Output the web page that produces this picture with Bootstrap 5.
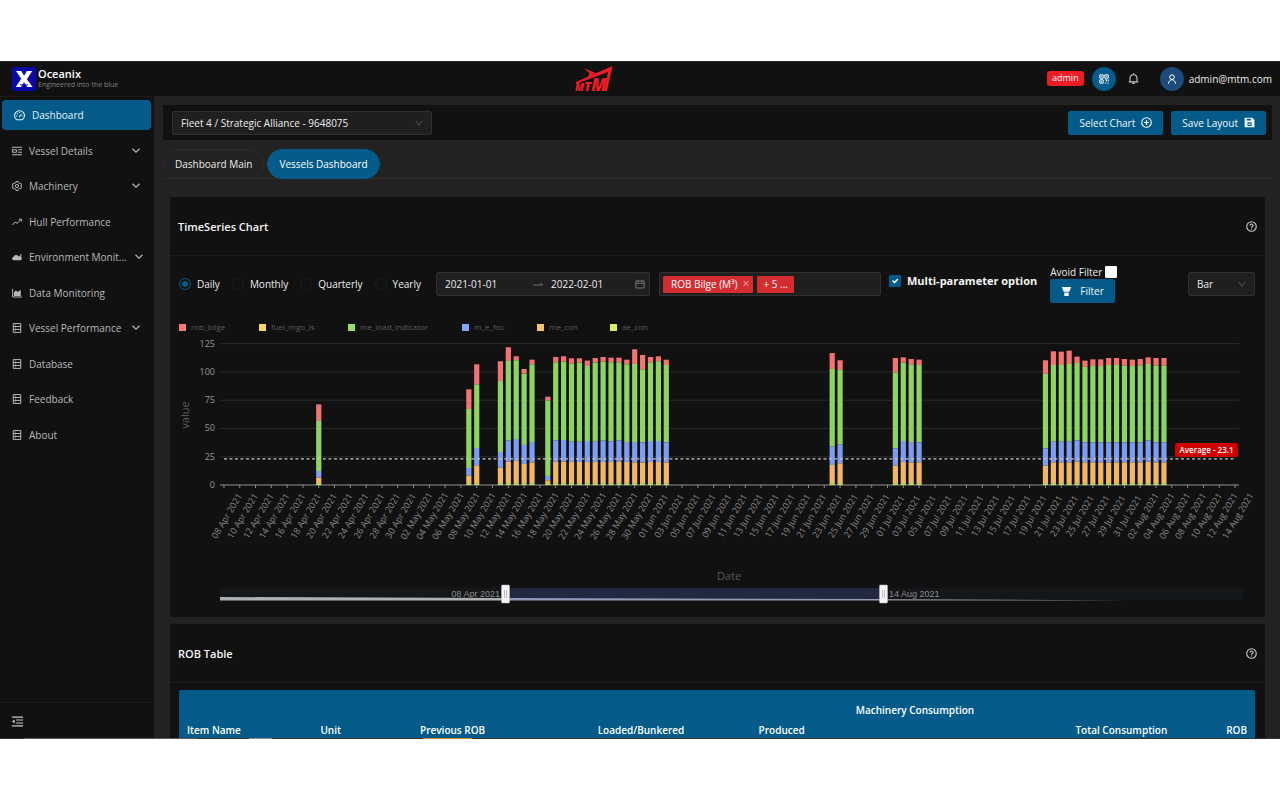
<!DOCTYPE html>
<html lang="en" data-bs-theme="dark">
<head>
<meta charset="utf-8">
<meta name="viewport" content="width=device-width, initial-scale=1">
<title>Oceanix - Vessels Dashboard</title>
<link href="https://cdn.jsdelivr.net/npm/bootstrap@5.3.0/dist/css/bootstrap.min.css" rel="stylesheet">
<style>
  :root { --ink:#111; --panel:#222; --line:#1d1d1d; --edge:#303030; --brand:#045b89; --danger:#d32d31; }
  body { font-family:"Open Sans","Noto Sans",sans-serif; font-size:10px; line-height:16px; background:#fff; color:#ececec; padding:61px 0; }
  .shell { height:calc(100vh - 122px); background:var(--panel); overflow:hidden; position:relative; }
  .topbar { height:35px; background:var(--ink); box-shadow:inset 0 1px #2c2c2c; }
  .brand-area { width:154px; padding-left:12px; gap:2px; }
  .brand-mark { width:24px; height:24px; }
  .brand-name { font-size:11px; line-height:13px; font-weight:600; color:#fff; }
  .brand-tag { font-size:7px; line-height:10px; color:#808080; }
  .side { width:154px; background:var(--ink); border-top:1px solid var(--line); }
  .side nav { height:350px; padding:0 3px 0 2px; margin-top:3px; }
  .side a { height:30px; padding:0 10px; color:#b8b8b8; gap:7px; border-radius:4px; text-decoration:none; white-space:nowrap; }
  .side a.active { background:var(--brand); color:#e8f1f6; padding-left:12px; }
  .side a.active svg { width:11px; height:11px; }
  .side .collapser { height:37px; padding-left:12px; border-top:1px solid var(--line); }
  .bare { background:none; border:0; padding:0; display:flex; color:#c8c8c8; }
  .ic { width:10px; height:10px; flex:none; fill:none; stroke:currentColor; stroke-width:1.2; }
  .ic-md { width:11px; height:11px; flex:none; }
  .main-area { padding:9px 8px 0 9px; min-width:0; }
  .toolbox { background:var(--ink); height:35px; padding:0 6px 0 9px; }
  .ctl { height:24px; background-color:#1f1f1f; border:1px solid var(--edge); border-radius:2px; color:#ececec; font-size:10px; line-height:16px; padding:3px 8px; }
  select.ctl { background-position:right 8px center; background-size:8px 8px;
    background-image:url("data:image/svg+xml,%3Csvg xmlns='http://www.w3.org/2000/svg' viewBox='0 0 10 10'%3E%3Cpath d='M1 2l4 6 4-6' fill='none' stroke='%23555' stroke-width='1.2'/%3E%3C/svg%3E"); }
  .fleet { width:260px; }
  .kind { width:67px; }
  .act { height:24px; background:var(--brand); color:#f2f7fa; border:0; border-radius:2px; line-height:16px; padding:0 11px; gap:6px; }
  .act .ic { width:11px; height:11px; }
  .tabs { margin-top:9px; border-bottom:1px solid #2c2c2c; gap:3px; }
  .tabs button { height:30px; border:1px solid #2c2c2c; border-radius:15px; background:none; color:#ececec; padding:0 11px; margin-bottom:-1px; white-space:nowrap; }
  .tabs button.active { background:var(--brand); border-color:var(--brand); color:#fff; }
  .box { background:var(--ink); margin:0 7px; }
  .box-head { height:59px; border-bottom:1px solid var(--line); padding:0 8px; }
  .box-head h2 { font-size:11px; line-height:16px; padding-top:2px; font-weight:600; color:#f5f5f5; }
  .chart-box { margin-top:18px; height:420px; }
  .filters { padding:2px 10px 0 9px; height:54px; }
  .form-check-input { margin:0; width:12px; height:12px; flex:none; }
  .form-check-input[type=radio] { background-color:transparent; border-color:#1f1f1f; }
  .form-check-input[type=radio]:checked { border-color:var(--brand);
    background-image:url("data:image/svg+xml,%3Csvg xmlns='http://www.w3.org/2000/svg' viewBox='0 0 12 12'%3E%3Ccircle cx='6' cy='6' r='3.6' fill='%23045b89'/%3E%3C/svg%3E"); }
  .form-check-input[type=checkbox] { border-radius:1px; background-color:#fff; border-color:#fff; }
  .form-check-input[type=checkbox]:checked { background-color:var(--brand); border-color:var(--brand); }
  .opts { gap:12px; width:257px; }
  .opts label, .multi { gap:6px; }
  .range { width:214px; }
  .range input { width:84px; background:none; border:0; color:#ececec; padding:0; line-height:16px; }
  .picks { width:222px; padding:2px 3px; gap:4px; margin-left:9px; }
  .pick { background:var(--danger); color:#fff; height:17px; padding:0 4px 0 8px; gap:5px; border-radius:1px; white-space:nowrap; }
  .pick button { background:none; border:0; padding:0; color:#f3a5a7; line-height:16px; font-size:12px; }
  .pick.more { padding:0 6px; }
  .multi { margin-left:8px; margin-bottom:6px; font-size:11px; font-weight:700; color:#f5f5f5; }
  .avoid { margin-left:13px; }
  .avoid label { gap:3px; line-height:14px; }
  .avoid .act { gap:8px; }
  .role { background:#ee1c25; color:#fff; border-radius:3px; height:15px; line-height:14px; font-size:9px; padding:0 5px; margin-right:8px; }
  .bell { margin:0 21px 0 12px; }
  .mail { margin-left:5px; }
  .round { width:24px; height:24px; border-radius:50%; border:0; padding:0; background:var(--brand); color:#fff; }
  .round.who { background:#1d4b7a; }
  .plot { display:block; width:100%; }
  .rob-box { margin-top:7px; }
  .rob { margin:7px 10px 0 9px; width:calc(100% - 19px); table-layout:fixed; background:var(--brand); color:#fff; line-height:16px; border-radius:2px; }
  .rob th { height:40px; padding:0 8px; font-weight:600; white-space:nowrap; }
  .foot { position:absolute; left:0; right:0; bottom:0; height:1px; background:linear-gradient(90deg,#333 24px,#625f60 24px,#5a595a 198px,#333 198px,#333 249px,#8a8f93 249px,#8a8f93 272px,#333 272px,#333 423px,#cf8630 423px,#cf8630 472px,#333 472px); }
</style>
</head>
<body>
<svg class="d-none" aria-hidden="true">
  <symbol id="i-down" viewBox="0 0 10 10"><path d="M1.500 2.800L5 6.200l3.500-3.400"/></symbol>
  <symbol id="i-dash" viewBox="0 0 12 12"><path d="M2.900 10.600a5.400 5.400 0 1 1 6.200 0zM5.500 7.500l2.700-2.700M2.300 6.500h1M6 2.300v1M3.300 3.700l.7.700M9 6.500h.8"/></symbol>
  <symbol id="i-detail" viewBox="0 0 12 12"><path d="M0 1.500h12M0 10.500h12M.6 4.500h5v3h-5zM7.500 4.500H12M7.500 7.500H12"/></symbol>
  <symbol id="i-gear" viewBox="0 0 12 12"><path d="M4.700.7h2.600l.4 1.500 1.200.7 1.500-.4 1.200 2.200L10.500 6l1.100 1.200-1.200 2.200-1.500-.4-1.200.8-.4 1.500H4.700l-.4-1.500-1.200-.8-1.500.4L.4 7.200 1.500 6 .4 4.700l1.200-2.200 1.500.4 1.200-.7z"/><circle cx="6" cy="6" r="1.900"/></symbol>
  <symbol id="i-trend" viewBox="0 0 12 12"><path d="M.5 9.500l3.200-3.500 2.500 1.500 4.800-4.500M8.500 2.700H11.300v2.500"/></symbol>
  <symbol id="i-cloud" viewBox="0 0 12 12"><path fill="currentColor" stroke="none" d="M1.800 10a2 2 0 0 1-.2-3.900A3.300 3.300 0 0 1 7.700 5.300 2.400 2.400 0 0 1 10.300 10zM9 3.500l2.500-1L11 5.500z"/></symbol>
  <symbol id="i-area" viewBox="0 0 12 12"><path d="M.8 1v9.800H12"/><path fill="currentColor" stroke="none" d="M2.300 9.500V5.500l2.400-2.700 2.300 2 3.500-2.800v7.500z"/></symbol>
  <symbol id="i-rows" viewBox="0 0 12 12"><path d="M1.500.7h9v10.600h-9zM1.500 4.200h9M1.500 7.700h9M3.500 2.500h1M3.500 6h1M3.500 9.500h1"/></symbol>
  <symbol id="i-fold" viewBox="0 0 12 12"><path d="M0 1.200h12M4.500 4.400H12M4.500 7.600H12M0 10.800h12"/><path fill="currentColor" stroke="none" d="M3 3.800v4.400L0 6z"/></symbol>
  <symbol id="i-plus" viewBox="0 0 12 12"><circle cx="6" cy="6" r="5.200"/><path d="M6 3.300v5.400M3.300 6h5.400"/></symbol>
  <symbol id="i-help" viewBox="0 0 12 12"><circle cx="6" cy="6" r="5.200"/><path d="M4.300 4.900c0-2.300 3.400-2.200 3.400-.1C7.700 6 6 6 6 7.400M6 8.300v1.100"/></symbol>
  <symbol id="i-save" viewBox="0 0 12 12"><path fill="currentColor" stroke="none" fill-rule="evenodd" d="M.7.700h8.300l2.400 2.400v8.200H.7zM3 2v1.800h4.500V2zM3.800 5.800v4h4.500v-4zM5 7h2v1.600H5z"/></symbol>
  <symbol id="i-funnel" viewBox="0 0 12 12"><path fill="currentColor" stroke="none" d="M.8 1h10.400L9 6.300H3zM3.600 7.200h4.800V11H3.600z"/></symbol>
  <symbol id="i-cal" viewBox="0 0 12 12"><path d="M1 2.300h10v8.500H1zM1 5.200h10M3.700.8v2.700M8.300.8v2.700"/></symbol>
  <symbol id="i-arrow" viewBox="0 0 12 12"><path d="M0 7.200h11.500L8.800 4.300"/></symbol>
  <symbol id="i-qr" viewBox="0 0 12 12"><path d="M1 1h4v4H1zM7 1h4v4H7zM1 7h4v4H1zM3 2.500v1M9 2.500v1M3 8.500v1M7 7h2v2M11 6.500v2.500M7 11h1.500M10 11h1.500"/></symbol>
  <symbol id="i-bell" viewBox="0 0 12 12"><path d="M.8 9.700h10.400M2.200 9.500V5.700a3.800 3.800 0 0 1 7.600 0v3.800M6 .4v1.500M4.700 11.300h2.600"/></symbol>
  <symbol id="i-user" viewBox="0 0 12 12"><circle cx="6" cy="3.800" r="2.800"/><path d="M1.800 11.700c.2-3 2-4.800 4.200-4.800s4 1.800 4.200 4.800"/></symbol>
</svg>

<div class="shell d-flex flex-column">
  <header class="topbar d-flex align-items-center flex-shrink-0">
    <div class="brand-area d-flex align-items-center flex-shrink-0">
      <svg class="brand-mark" viewBox="0 0 24 24" overflow="visible" role="img" aria-label="Oceanix logo"><rect width="24" height="24" rx="2" fill="#0a09a8"/><text x="12" y="20" text-anchor="middle" font-family="Open Sans,sans-serif" font-weight="800" font-size="23" fill="#fff">X</text><path d="M8 17.500c2 1.500 3-1 4 0s3 1 4 0" stroke="#0a09a8" fill="none"/></svg>
      <div><div class="brand-name">Oceanix</div><div class="brand-tag text-nowrap">Engineered into the blue</div></div>
    </div>
    <div class="flex-fill d-flex justify-content-end align-items-center pe-2 position-relative">
      <svg class="position-absolute top-50 translate-middle" style="left:39.100%" width="38" height="32" viewBox="0 0 38 32" overflow="visible" role="img" aria-label="MTM">
        <g fill="#ee1c25"><path d="M1 19L37.500 3 32 28h-2.500L33 9 1 21z"/><path d="M9.500 5.500l11 4.500-8 5 2-4.500z"/>
        <text x="0" y="28" font-family="Open Sans,sans-serif" font-weight="800" font-style="italic"><tspan font-size="10">M</tspan><tspan font-size="13">T</tspan><tspan font-size="17">M</tspan></text></g>
      </svg>
      <span class="role">admin</span>
      <button class="round d-flex align-items-center justify-content-center" aria-label="Scan code"><svg class="ic"><use href="#i-qr"/></svg></button>
      <button class="bare bell" aria-label="Notifications"><svg class="ic ic-md"><use href="#i-bell"/></svg></button>
      <button class="round who d-flex align-items-center justify-content-center" aria-label="Account"><svg class="ic"><use href="#i-user"/></svg></button>
      <span class="mail text-nowrap">admin@mtm.com</span>
    </div>
  </header>

  <div class="d-flex flex-fill" style="min-height:0">
    <aside class="side d-flex flex-column justify-content-between flex-shrink-0">
      <nav class="d-flex flex-column justify-content-between">
        <a href="#" class="active d-flex align-items-center"><svg class="ic"><use href="#i-dash"/></svg>Dashboard</a>
        <a href="#" class="d-flex align-items-center"><svg class="ic"><use href="#i-detail"/></svg><span class="flex-fill">Vessel Details</span><svg class="ic"><use href="#i-down"/></svg></a>
        <a href="#" class="d-flex align-items-center"><svg class="ic"><use href="#i-gear"/></svg><span class="flex-fill">Machinery</span><svg class="ic"><use href="#i-down"/></svg></a>
        <a href="#" class="d-flex align-items-center"><svg class="ic"><use href="#i-trend"/></svg>Hull Performance</a>
        <a href="#" class="d-flex align-items-center"><svg class="ic"><use href="#i-cloud"/></svg><span class="flex-fill">Environment Monit...</span><svg class="ic"><use href="#i-down"/></svg></a>
        <a href="#" class="d-flex align-items-center"><svg class="ic"><use href="#i-area"/></svg>Data Monitoring</a>
        <a href="#" class="d-flex align-items-center"><svg class="ic"><use href="#i-rows"/></svg><span class="flex-fill">Vessel Performance</span><svg class="ic"><use href="#i-down"/></svg></a>
        <a href="#" class="d-flex align-items-center"><svg class="ic"><use href="#i-rows"/></svg>Database</a>
        <a href="#" class="d-flex align-items-center"><svg class="ic"><use href="#i-rows"/></svg>Feedback</a>
        <a href="#" class="d-flex align-items-center"><svg class="ic"><use href="#i-rows"/></svg>About</a>
      </nav>
      <div class="collapser d-flex align-items-center"><button class="bare" aria-label="Collapse menu"><svg class="ic ic-md"><use href="#i-fold"/></svg></button></div>
    </aside>

    <main class="main-area flex-fill">
      <div class="toolbox d-flex align-items-center">
        <select class="form-select ctl fleet" aria-label="Vessel"><option>Fleet 4 / Strategic Alliance - 9648075</option></select>
        <button class="act d-flex align-items-center ms-auto me-2">Select Chart<svg class="ic"><use href="#i-plus"/></svg></button>
        <button class="act d-flex align-items-center">Save Layout<svg class="ic"><use href="#i-save"/></svg></button>
      </div>
      <div class="tabs d-flex" role="tablist">
        <button role="tab">Dashboard Main</button>
        <button role="tab" class="active" aria-selected="true">Vessels Dashboard</button>
      </div>

      <section class="box chart-box">
        <div class="box-head d-flex align-items-center justify-content-between"><h2 class="m-0">TimeSeries Chart</h2><button class="bare" aria-label="Help"><svg class="ic ic-md"><use href="#i-help"/></svg></button></div>
        <div class="filters d-flex align-items-center">
          <div class="opts d-flex flex-shrink-0">
            <label class="d-flex align-items-center"><input class="form-check-input" type="radio" name="step" checked>Daily</label>
            <label class="d-flex align-items-center"><input class="form-check-input" type="radio" name="step">Monthly</label>
            <label class="d-flex align-items-center"><input class="form-check-input" type="radio" name="step">Quarterly</label>
            <label class="d-flex align-items-center"><input class="form-check-input" type="radio" name="step">Yearly</label>
          </div>
          <div class="ctl range d-flex align-items-center">
            <input type="text" value="2021-01-01" aria-label="From"><svg class="ic text-secondary ms-1 me-2"><use href="#i-arrow"/></svg><input type="text" value="2022-02-01" aria-label="To"><svg class="ic text-secondary"><use href="#i-cal"/></svg>
          </div>
          <div class="ctl picks d-flex align-items-center">
            <span class="pick d-flex align-items-center">ROB Bilge (M³)<button aria-label="Remove">×</button></span><span class="pick more">+ 5 ...</span>
          </div>
          <label class="multi d-flex align-items-center text-nowrap"><input class="form-check-input" type="checkbox" checked>Multi-parameter option</label>
          <div class="avoid">
            <label class="d-flex align-items-center text-nowrap">Avoid Filter<input class="form-check-input" type="checkbox"></label>
            <button class="act d-flex align-items-center"><svg class="ic"><use href="#i-funnel"/></svg>Filter</button>
          </div>
          <select class="form-select ctl kind ms-auto" aria-label="Chart type"><option>Bar</option></select>
        </div>
        <svg id="plot" class="plot" viewBox="0 0 1095 306" role="img" aria-label="Daily values by parameter"></svg>
      </section>

      <section class="box rob-box">
        <div class="box-head d-flex align-items-center justify-content-between"><h2 class="m-0">ROB Table</h2><button class="bare" aria-label="Help"><svg class="ic ic-md"><use href="#i-help"/></svg></button></div>
        <table class="rob">
          <colgroup><col style="width:12.400%"><col style="width:6.500%"><col style="width:10.300%"><col style="width:18.500%"><col style="width:11.200%"><col style="width:9.500%"><col style="width:9.500%"><col style="width:14.700%"><col style="width:7.400%"></colgroup>
          <thead>
            <tr><th rowspan="2">Item Name</th><th rowspan="2">Unit</th><th rowspan="2" class="text-end">Previous ROB</th><th rowspan="2" class="text-end">Loaded/Bunkered</th><th rowspan="2" class="text-end">Produced</th><th colspan="2" class="text-center">Machinery Consumption</th><th rowspan="2" class="text-end">Total Consumption</th><th rowspan="2" class="text-end">ROB</th></tr>
            <tr><th></th><th></th></tr>
          </thead>
        </table>
      </section>
    </main>
  </div>
  <div class="foot"></div>
</div>

<script src="https://cdn.jsdelivr.net/npm/bootstrap@5.3.0/dist/js/bootstrap.bundle.min.js"></script>
<script>
  const NS = 'http://www.w3.org/2000/svg', plot = document.getElementById('plot');
  function add(tag, attrs, text) {
    const el = document.createElementNS(NS, tag);
    for (const k in attrs) el.setAttribute(k, attrs[k]);
    if (text) el.textContent = text;
    plot.appendChild(el);
    return el;
  }
  const FONT = '"Open Sans","Noto Sans",sans-serif';
  const left = 50, right = 1069, base = 175, step = (right - left) / 129;
  const y = v => base - v * 1.131, x = day => left + step * (day + .5);

  // Legend
  [['rob_bilge','#ff7875',9],['fuel_mgo_ls','#ffd666',89],['me_load_indicator','#95de64',178],['m_e_foc','#85a5ff',292],['me_con','#ffc069',367],['ae_con','#d3f261',440]].forEach(([name, color, lx]) => {
    add('rect', {x:lx, y:14, width:7, height:7, fill:color});
    add('text', {x:lx + 12, y:20, fill:'#5c5c5c', 'font-size':8, 'font-family':FONT}, name);
  });

  // Grid and value axis
  for (let v = 0; v <= 125; v += 25) {
    add('line', {x1:left, x2:right, y1:y(v), y2:y(v), stroke:v ? '#2b2b2b' : '#666', 'stroke-width':v ? 1 : 1.5});
    add('text', {x:45, y:y(v) + 3, fill:'#969696', 'font-size':9, 'text-anchor':'end', 'font-family':FONT}, String(v));
  }

  // Cumulative tops per day offset: rob_bilge, me_load_indicator, m_e_foc, me_con
  const days = {
    12:[71.3,56.6,12.4,6.5],31:[84.6,67.2,15,8.3],32:[106.7,89,32.7,17.4],35:[109.4,92,29.2,15.3],
    36:[121.8,109.7,39.2,20.6],37:[113.8,110.3,40.7,21.2],38:[102.6,98.5,35.4,18.6],39:[110.8,106.7,38,20],
    41:[78.1,74.6,8,4.1],42:[113.2,108.5,39.5,20.6],43:[113.8,109.1,39.8,20.6],44:[112,107.3,38.3,20.3],
    45:[112,108.2,38.3,20.3],46:[110,105.2,38.9,20.3],47:[112.3,108.2,38.3,20.3],48:[113.2,109.1,39.2,20.3],
    49:[112.6,108.5,38.6,20.3],50:[112.6,108.5,39.5,20.6],51:[110.8,106.7,38,20.3],52:[120,107,38,20],
    53:[115,102.3,37.7,19.8],54:[113.2,108.5,38.9,20.3],55:[113.8,109.4,38.9,20.3],56:[110.8,106.1,37.7,20],
    77:[116.7,102.6,33.9,17.7],78:[110.3,101.7,36,19.2],85:[112.3,99.6,32.4,17.1],86:[112.9,108.2,38.9,20.3],
    87:[111.4,106.7,38,20],88:[110.8,106.1,37.7,20],104:[110.3,98.2,32.4,17.1],105:[118.2,106.1,38.3,20],
    106:[117.9,106.1,38.3,20],107:[118.8,107,38.3,20],108:[113.5,107.9,39.5,20.6],109:[110,104.4,37.7,20],
    110:[111.1,105.2,37.7,20],111:[111.1,105.2,37.7,20],112:[112.3,106.1,37.7,20],113:[112.3,106.1,37.7,20],
    114:[111.4,105.5,37.7,20],115:[110.8,105.2,37.7,20],116:[111.4,105.8,37.7,20],117:[112.9,107,39.5,20.6],
    118:[112.3,105.5,37.7,20],119:[112.3,105.5,37.7,20]
  };
  const colors = ['#f27371','#8fd360','#7e9cf1','#f2b664','#c8e65d'];
  for (const d in days) {
    const tops = days[d].concat(1.6);
    tops.forEach((t, i) => {
      add('rect', {x:x(+d) - 2.6, width:5.2, y:y(t), height:(t - (tops[i + 1] || 0)) * 1.131, fill:colors[i]});
    });
  }

  // Date axis, one label every second day
  for (let d = 0; d <= 128; d += 2) {
    const date = new Date(Date.UTC(2021, 3, 8 + d));
    const label = String(date.getUTCDate()).padStart(2, '0') + ' ' + ['Apr','May','Jun','Jul','Aug'][date.getUTCMonth() - 3] + ' 2021';
    add('line', {x1:x(d), x2:x(d), y1:base, y2:base + 3, stroke:'#8c8c8c'});
    add('text', {x:0, y:3, transform:`translate(${x(d) + 3} 206) rotate(-59)`, fill:'#8a8a8a', 'font-size':9, 'text-anchor':'middle', 'font-family':FONT}, label);
  }
  add('text', {x:559, y:270, fill:'#595959', 'font-size':11, 'text-anchor':'middle', 'font-family':FONT}, 'Date');
  add('text', {transform:'translate(19 105) rotate(-90)', fill:'#595959', 'font-size':11, 'text-anchor':'middle', 'font-family':FONT}, 'value');

  // Average marker
  add('line', {x1:x(0), x2:x(128), y1:y(23.1), y2:y(23.1), stroke:'#c4c4c4', 'stroke-width':1.3, 'stroke-dasharray':'3 2.500'});
  add('rect', {x:1005, y:133, width:63, height:14, rx:2, fill:'#cf0000'});
  add('text', {x:1036.5, y:143, fill:'#fff', 'font-size':8, 'font-weight':600, 'text-anchor':'middle', 'font-family':FONT}, 'Average - 23.1');

  // Range slider with its miniature trend
  add('rect', {x:left, y:278, width:1023, height:12, fill:'#14171a'});
  add('rect', {x:335, y:278, width:378, height:12, fill:'#212840'});
  add('path', {d:'M50 287L335 288V290.500H50z', fill:'#b0b0b0'});
  add('path', {d:'M335 288L713 289V290.500H335z', fill:'#8f9bb8'});
  add('path', {d:'M713 289L960 290.500H713z', fill:'#8a8a8a'});
  [[330,'08 Apr 2021','end'],[719,'14 Aug 2021','start']].forEach(([tx, t, a]) =>
    add('text', {x:tx, y:287, fill:'#8c8c8c', 'font-size':9, 'text-anchor':a, 'font-family':'"Liberation Sans",sans-serif'}, t));
  [335, 713].forEach(hx => {
    add('rect', {x:hx - 3.5, y:275, width:8, height:18, rx:1, fill:'#f5f5f5', stroke:'#bfbfbf', 'stroke-width':.5});
    add('path', {d:`M${hx - .5} 280v8M${hx + 1.5} 280v8`, stroke:'#aaa', 'stroke-width':.7});
  });
</script>
</body>
</html>
